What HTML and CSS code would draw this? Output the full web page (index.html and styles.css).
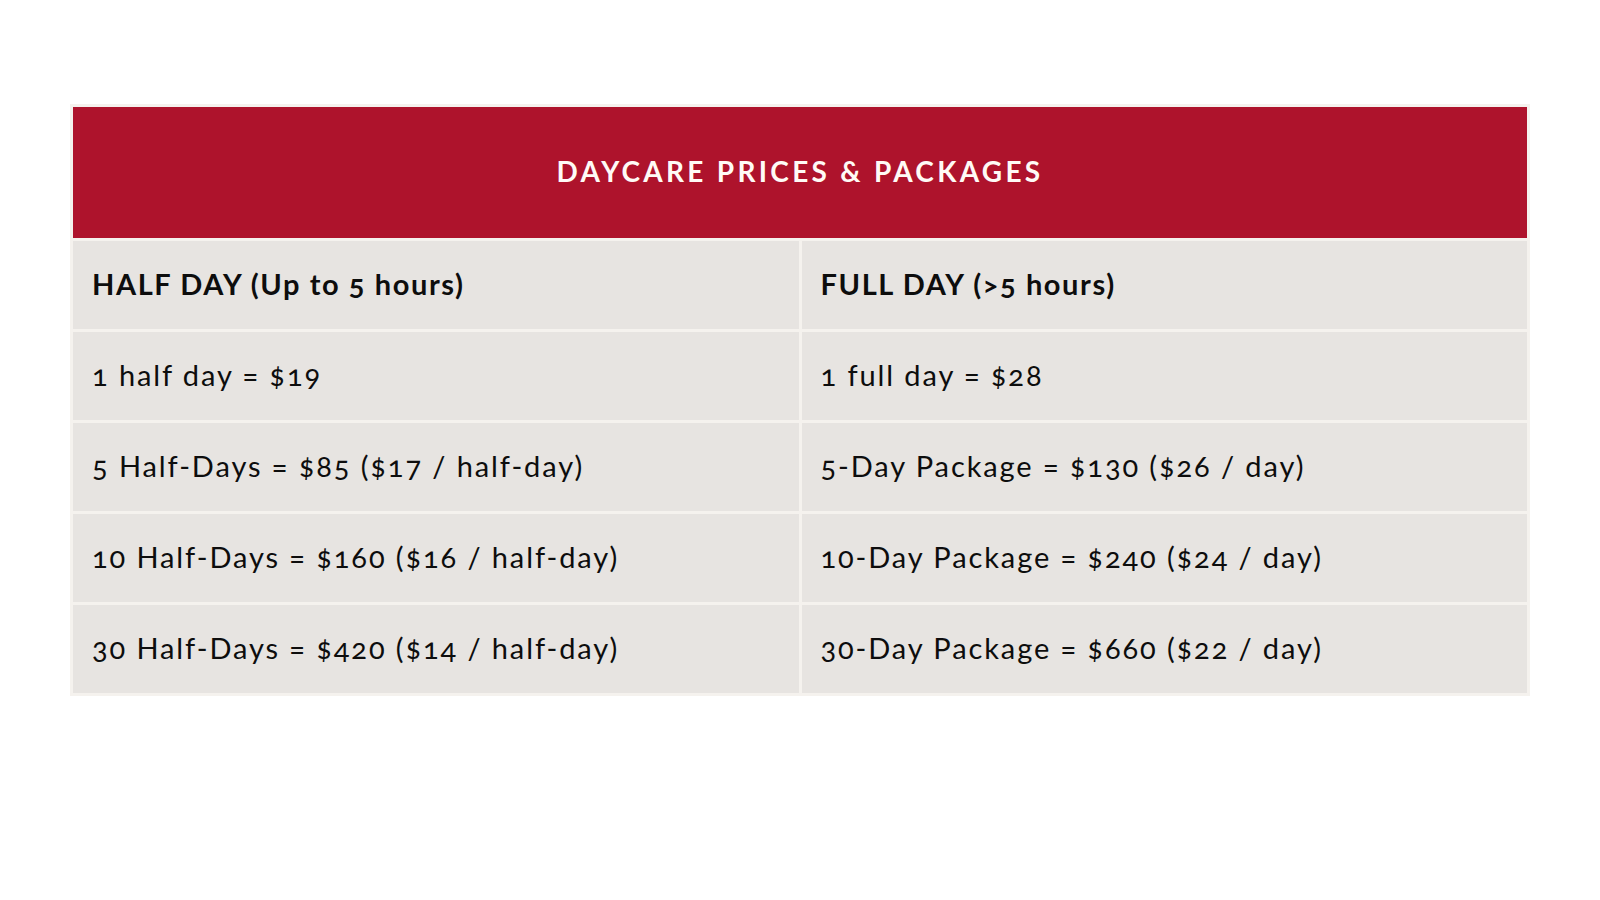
FILE: index.html
```html
<!DOCTYPE html>
<html lang="en">
<head>
<meta charset="utf-8">
<title>Daycare Prices &amp; Packages</title>
<link rel="stylesheet" href="styles.css">
</head>
<body>
<main class="page">
  <table class="prices">
    <colgroup><col class="col"><col class="col"></colgroup>
    <thead>
      <tr class="title-row"><th colspan="2" class="title">DAYCARE PRICES &amp; PACKAGES</th></tr>
    </thead>
    <tbody>
      <tr class="row head-row"><th class="cell head">HALF DAY (Up to 5 hours)</th><th class="cell head">FULL DAY (&gt;5 hours)</th></tr>
      <tr class="row"><td class="cell">1 half day = $19</td><td class="cell">1 full day = $28</td></tr>
      <tr class="row"><td class="cell">5 Half-Days = $85 ($17 / half-day)</td><td class="cell">5-Day Package = $130 ($26 / day)</td></tr>
      <tr class="row"><td class="cell">10 Half-Days = $160 ($16 / half-day)</td><td class="cell">10-Day Package = $240 ($24 / day)</td></tr>
      <tr class="row"><td class="cell">30 Half-Days = $420 ($14 / half-day)</td><td class="cell">30-Day Package = $660 ($22 / day)</td></tr>
    </tbody>
  </table>
</main>
</body>
</html>
```
FILE: styles.css
```css
html, body {
  margin: 0;
  padding: 0;
  background: #ffffff;
}
body {
  font-family: "Lato", "Open Sans", sans-serif;
  color: #0d0d0d;
  font-variant-numeric: oldstyle-nums;
}
.page {
  padding: 104px 0 0 70px;
}
.prices {
  width: 1460px;
  table-layout: fixed;
  border-collapse: separate;
  border-spacing: 3px;
  background: #f5f2ee;
}
.col {
  width: 50%;
}
.title-row {
  height: 131px;
}
.title {
  background: #ae132c;
  color: #fffaf6;
  font-size: 28px;
  font-weight: 700;
  letter-spacing: 3.3px;
  text-align: center;
  vertical-align: middle;
  padding: 0 0 4px 0;
}
.row {
  height: 88px;
}
.cell {
  background: #e7e4e1;
  padding: 0 19px 4px 19px;
  text-align: left;
  vertical-align: middle;
  font-size: 29px;
  font-weight: 400;
  letter-spacing: 1.9px;
  white-space: nowrap;
}
.head {
  font-weight: 700;
  letter-spacing: 1.6px;
}
```
